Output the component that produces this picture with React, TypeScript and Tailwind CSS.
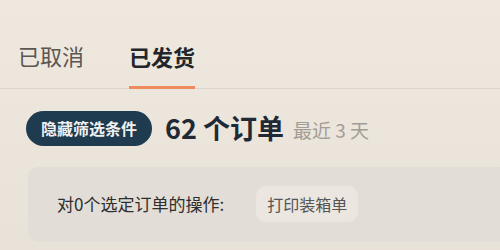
export default function App() {
  return (
    <div
      className="h-[250px] w-[500px] overflow-hidden bg-gradient-to-b from-[#efe8df] to-[#e9e2d8] text-[#222]"
      style={{ fontFamily: '"Noto Sans CJK SC", "Noto Sans", sans-serif' }}
    >
      {/* tabs */}
      <div className="flex items-end gap-[45px] border-b border-[#ddd5cb] pl-[18px] pt-[38px]">
        <div className="pb-[16px] text-[22px] leading-[34px] text-[#5a5652]">已取消</div>
        <div className="-mb-px border-b-[3px] border-[#ee8a5c] pb-[13px] text-[22px] font-bold leading-[34px] text-[#22262b]">
          已发货
        </div>
      </div>

      {/* summary */}
      <div className="mt-[19px] flex items-center pl-[26px]">
        <span className="flex h-[35px] items-center rounded-full bg-[#1e3b4f] px-[15px] text-[16px] font-bold text-[#f0f0f0]">
          隐藏筛选条件
        </span>
        <span className="ml-[13px] text-[27px] font-bold text-[#1f2a36]">62 个订单</span>
        <span className="ml-[9px] mt-[4px] text-[19px] text-[#a29d97]">最近 3 天</span>
      </div>

      {/* actions */}
      <div className="ml-[28px] mt-[18px] flex h-[75px] items-center rounded-l-[10px] bg-[#e2ddd6] pl-[29px]">
        <span className="text-[17px] text-[#2e2e2e]">对0个选定订单的操作:</span>
        <button
          type="button"
          className="ml-[32px] flex h-[36px] items-center rounded-[10px] bg-[#ebe6df] px-[11px] text-[16px] text-[#555]"
        >
          打印装箱单
        </button>
      </div>
    </div>
  );
}
